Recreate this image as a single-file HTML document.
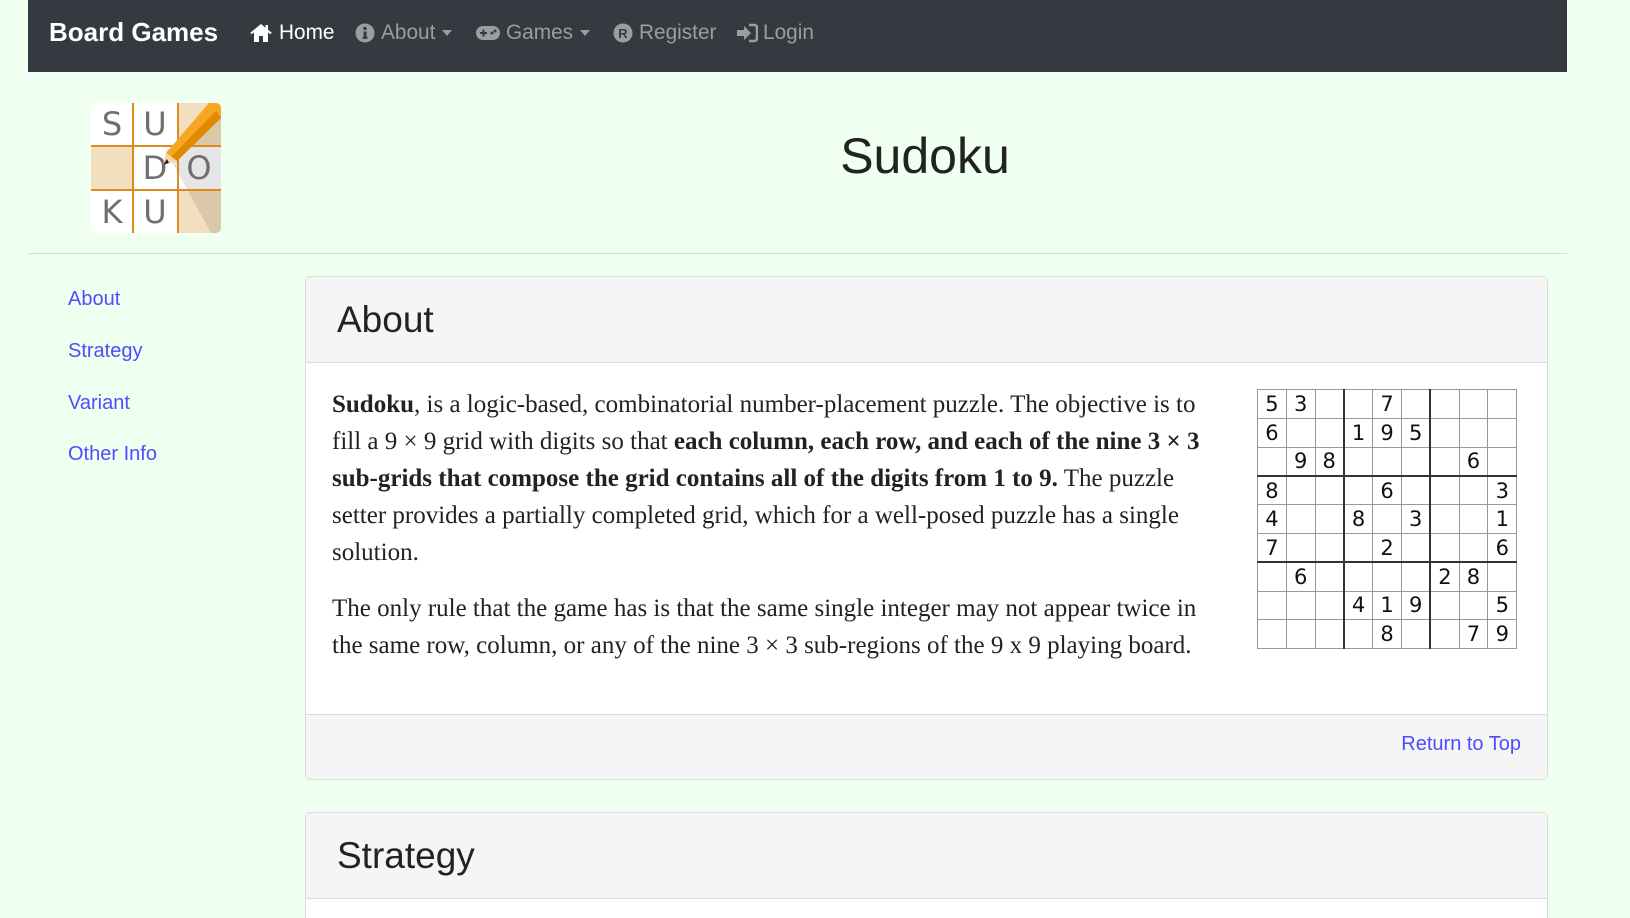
<!DOCTYPE html>
<html style="overflow:hidden;height:918px"><head><meta charset="utf-8"><style>
*{box-sizing:border-box;margin:0;padding:0}
body{width:1630px;height:918px;overflow:hidden;background:#effff0;font-family:"Liberation Sans",sans-serif;position:relative}
.nav{position:absolute;left:28px;top:0;width:1539px;height:72px;background:#343a40}
.nav span{position:absolute;top:19px;font-size:20.8px;line-height:28px;color:#9a9da1;white-space:nowrap}
.brand{position:absolute;left:21px;top:16px;font-size:26px;font-weight:bold;color:#fff;line-height:32px}
.ic{position:absolute;top:23px}
.caret{position:absolute;top:30px;width:0;height:0;border-left:5px solid transparent;border-right:5px solid transparent;border-top:6px solid #9a9da1}
h1{position:absolute;left:0;width:1850px;text-align:center;top:124px;font-weight:normal;font-size:50px;color:#222;line-height:64px}
.hr{position:absolute;left:28px;top:253px;width:1539px;height:1px;background:#d8dcd8}
.side a{position:absolute;left:68px;font-size:20px;color:#4d4dff;text-decoration:none;line-height:24px}
.card{position:absolute;left:305px;width:1243px;border:1px solid #dcdcdc;border-radius:5px;background:#fff;overflow:hidden}
.ch{background:#f5f5f5;border-bottom:1px solid #dcdcdc;height:86px;position:relative}
.ch div{position:absolute;left:31px;top:22px;font-size:37px;color:#222}
.body{position:absolute;left:26px;top:24px;width:885px;font-family:"Liberation Serif",serif;font-size:25px;line-height:37px;color:#222}
.body p{margin-bottom:19px}
table{position:absolute;left:951px;top:26px;border-collapse:collapse;font-family:"DejaVu Sans",sans-serif;font-size:21px}
td{width:28.8px;height:28.8px;border:1px solid #999;text-align:center;padding:0;line-height:26px;color:#111}
td.l{border-left:2px solid #333}td.t{border-top:2px solid #333}
.foot{position:absolute;left:0;top:437px;width:100%;height:66px;background:#f5f5f5;border-top:1px solid #dcdcdc}
.foot a{position:absolute;right:26px;top:18px;font-size:20px;color:#4d4dff;text-decoration:none}
</style></head><body>
<div class="nav">
<div class="brand">Board Games</div>
<svg class="ic" style="left:221px" width="24" height="20" viewBox="0 0 24 20"><path d="M12 1 L1 10 L3 11 L5 9.5 V19 H10 V13 H14 V19 H19 V9.5 L21 11 L23 10 L19 6.7 V2 H16.5 V4.7 Z" fill="#fff"/></svg>
<span style="left:251px;color:#fff">Home</span>
<svg class="ic" style="left:327px" width="20" height="20" viewBox="0 0 20 20"><circle cx="10" cy="10" r="9.5" fill="#9a9da1"/><rect x="8.6" y="8.5" width="3" height="7" fill="#343a40"/><rect x="7.5" y="14" width="5" height="1.8" fill="#343a40"/><circle cx="10" cy="5.5" r="1.7" fill="#343a40"/></svg>
<span style="left:353px">About</span><div class="caret" style="left:414px"></div>
<svg class="ic" style="left:447px;top:24px" width="26" height="18" viewBox="0 0 26 18"><rect x="1" y="2" width="24" height="14" rx="7" fill="#9a9da1"/><rect x="5" y="8" width="7" height="2" fill="#343a40"/><rect x="7.5" y="5.5" width="2" height="7" fill="#343a40"/><circle cx="17" cy="9" r="1.5" fill="#343a40"/><circle cx="20" cy="7" r="1.5" fill="#343a40"/></svg>
<span style="left:478px">Games</span><div class="caret" style="left:552px"></div>
<svg class="ic" style="left:585px" width="20" height="20" viewBox="0 0 20 20"><circle cx="10" cy="10" r="9.5" fill="#9a9da1"/><text x="10" y="15" text-anchor="middle" font-family="Liberation Sans" font-weight="bold" font-size="13" fill="#343a40">R</text></svg>
<span style="left:611px">Register</span>
<svg class="ic" style="left:708px" width="22" height="20" viewBox="0 0 22 20"><path d="M1 7 H8 V3 L15 10 L8 17 V13 H1 Z" fill="#9a9da1"/><path d="M13 2 H18 Q21 2 21 5 V15 Q21 18 18 18 H13" stroke="#9a9da1" stroke-width="2.5" fill="none"/></svg>
<span style="left:735px">Login</span>
</div>
<svg style="position:absolute;left:91px;top:103px" width="130" height="130" viewBox="0 0 130 130">
<defs><clipPath id="c"><rect width="130" height="130" rx="5"/></clipPath></defs>
<g clip-path="url(#c)">
<rect width="130" height="130" fill="#fff"/>
<rect x="87" y="0" width="43" height="43" fill="#f3dfbd"/><rect x="0" y="43" width="43" height="43" fill="#f3dfbd"/><rect x="87" y="87" width="43" height="43" fill="#f3dfbd"/>
<polygon points="75,48 130,10 130,130 120,130" fill="#000" opacity="0.1"/>
<rect x="41" y="0" width="2" height="130" fill="#dc8a1e"/><rect x="86" y="0" width="2" height="130" fill="#dc8a1e"/>
<rect x="0" y="42" width="130" height="2" fill="#dc8a1e"/><rect x="0" y="86" width="130" height="2" fill="#dc8a1e"/>
<g font-family="DejaVu Sans" font-size="32" fill="#6f6f6f" text-anchor="middle"><text x="21" y="32">S</text><text x="64" y="32">U</text><text x="64" y="76">D</text><text x="108" y="76">O</text><text x="21" y="120">K</text><text x="64" y="120">U</text></g>
<polygon points="118,0 130,0 130,15 86,58 75,50" fill="#f5a623"/><polygon points="130,15 86,58 80,54 125,8" fill="#e08a00"/>
<polygon points="75,50 86,58 72,62" fill="#f7d9a6"/><polygon points="72,62 76,56 78,60" fill="#222"/>
</g></svg>
<h1>Sudoku</h1>
<div class="hr"></div>
<div class="side"><a style="top:287px">About</a><a style="top:339px">Strategy</a><a style="top:391px">Variant</a><a style="top:442px">Other Info</a></div>
<div class="card" style="top:276px;height:504px">
<div class="ch"><div>About</div></div>
<div style="position:relative">
<div class="body" style="top:23px">
<p><b>Sudoku</b>, is a logic-based, combinatorial number-placement puzzle. The objective is to fill a 9 × 9 grid with digits so that <b>each column, each row, and each of the nine 3 × 3 sub-grids that compose the grid contains all of the digits from 1 to 9.</b> The puzzle setter provides a partially completed grid, which for a well-posed puzzle has a single solution.</p>
<p>The only rule that the game has is that the same single integer may not appear twice in the same row, column, or any of the nine 3 × 3 sub-regions of the 9 x 9 playing board.</p>
</div>
<table>
<tr><td>5</td><td>3</td><td></td><td class="l"></td><td>7</td><td></td><td class="l"></td><td></td><td></td></tr>
<tr><td>6</td><td></td><td></td><td class="l">1</td><td>9</td><td>5</td><td class="l"></td><td></td><td></td></tr>
<tr><td></td><td>9</td><td>8</td><td class="l"></td><td></td><td></td><td class="l"></td><td>6</td><td></td></tr>
<tr><td class="t">8</td><td class="t"></td><td class="t"></td><td class="l t"></td><td class="t">6</td><td class="t"></td><td class="l t"></td><td class="t"></td><td class="t">3</td></tr>
<tr><td>4</td><td></td><td></td><td class="l">8</td><td></td><td>3</td><td class="l"></td><td></td><td>1</td></tr>
<tr><td>7</td><td></td><td></td><td class="l"></td><td>2</td><td></td><td class="l"></td><td></td><td>6</td></tr>
<tr><td class="t"></td><td class="t">6</td><td class="t"></td><td class="l t"></td><td class="t"></td><td class="t"></td><td class="l t">2</td><td class="t">8</td><td class="t"></td></tr>
<tr><td></td><td></td><td></td><td class="l">4</td><td>1</td><td>9</td><td class="l"></td><td></td><td>5</td></tr>
<tr><td></td><td></td><td></td><td class="l"></td><td>8</td><td></td><td class="l"></td><td>7</td><td>9</td></tr>
</table>
</div>
<div class="foot"><a>Return to Top</a></div>
</div>
<div class="card" style="top:812px;height:120px">
<div class="ch"><div>Strategy</div></div>
</div>
</body></html>
